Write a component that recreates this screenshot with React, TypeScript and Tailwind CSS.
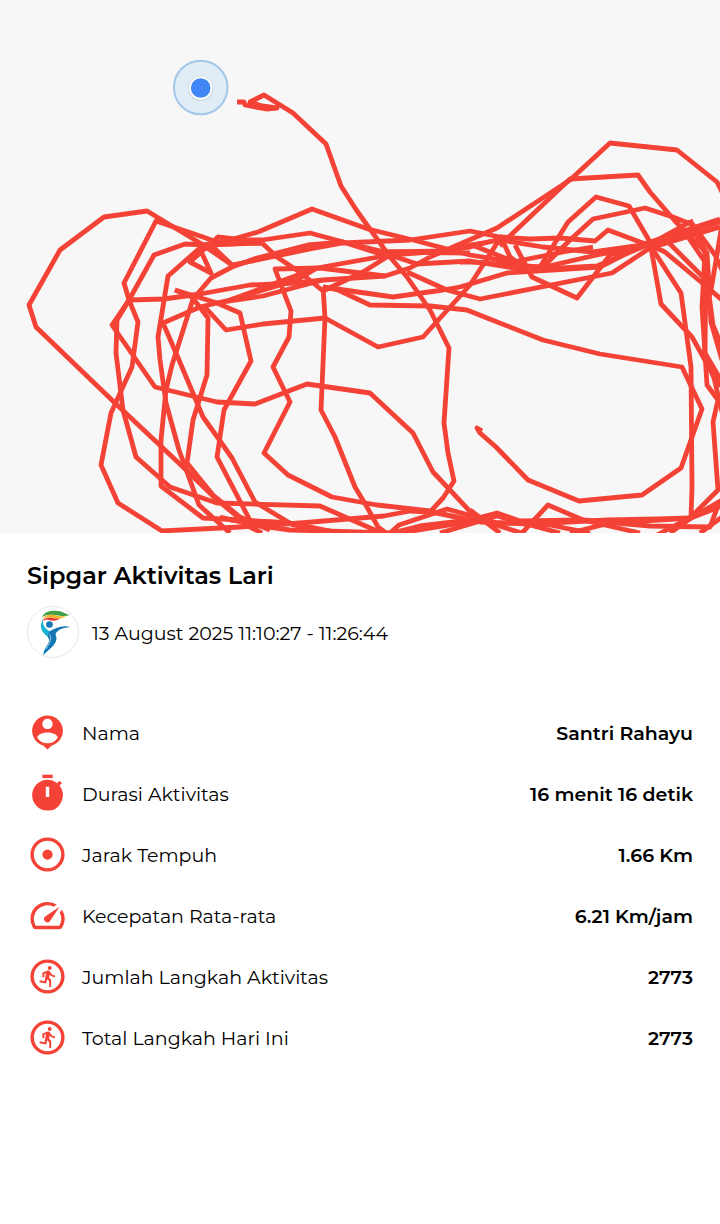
import React from "react";

const routeLines = [
  // start and end of the run
  "237,102 244,102 245,105 266,109 277,108 262,106 250,102 264,95 293,113 326,144 341,186 357,211 390,257 407,277 430,310 449,348 444,423 448,453 454,481 443,498 430,512",
  "482,431 477,428 480,433 496,447 528,480 579,501 642,495 681,468 702,409 682,367 600,354 543,340 487,318 467,310 430,306 370,305 338,290 323,287",
  // west side
  "232,265 200,243 147,211 104,217 60,250 29,305 36,327 115,403 183,467 216,499 250,527 262,533",
  "262,243 222,244 203,237 156,221 124,283 129,300 138,322 132,367 111,413 101,465 118,503 162,531 240,527 300,523 384,516 410,511 430,512",
  "262,243 207,245 185,244 154,255 129,300 117,320 116,353 123,410 136,457 170,487 217,503 320,506 377,531",
  "323,280 297,283 250,285 200,294 164,299 129,300 112,325 155,387 217,402 255,404 307,384 370,393 413,433 433,472 480,522",
  "232,265 211,245 200,248 168,276 158,337 160,360 166,403 179,450 199,505 230,533",
  "317,268 230,300 200,307 163,323 179,360 203,417 218,438 232,458 255,502 293,525 340,533",
  "175,290 217,303 240,313 251,361 224,410 217,457 255,530",
  "175,290 192,297 208,318 207,375 193,420 187,463 213,495 240,517 270,530",
  "203,305 226,330 263,324 325,318 378,347 423,337 470,285 501,237 510,257 527,270",
  "390,257 343,242 308,245 257,258 232,267 211,278 193,299 172,365 166,390 161,440 161,486 203,518 240,520 290,523",
  "200,249 211,273 190,262 218,237 243,240 262,240 310,233 347,243 385,252 470,253",
  // upper straight
  "203,245 230,240 258,232 312,209 368,229 413,240 470,255 513,262 563,252 593,247",
  "232,265 257,260 310,249 343,243 410,240 470,231 500,237 530,239 560,238 595,241 608,230 640,242 650,245",
  "430,257 410,268 385,276 320,268 275,269 291,311 289,337 273,367 290,402 264,453 288,475 332,497 377,505 430,511 480,522",
  "262,243 277,257 301,273 323,291 363,272 390,255 417,264 470,261 527,270 597,266 647,245",
  "217,303 230,301 263,296 323,280 385,276",
  "230,300 297,280 317,268 390,255 430,252 470,247 500,239",
  "323,287 325,318 321,410 335,437 355,487 367,507 378,527 386,533",
  "323,287 393,297 443,290 460,287 507,273 600,267 647,243 720,219",
  "407,272 447,290 480,299 612,273 650,248 720,227",
  "385,252 450,251 470,245 500,240 543,247 593,252 650,244 690,222",
  "430,257 460,244 497,228 570,180 610,143 677,150 717,182 722,192",
  "500,246 513,233 570,179 638,175 650,192 675,221 707,253 709,285",
  "460,262 472,262 540,267 568,222 596,197 629,206 650,242 661,304 692,337 720,387",
  "527,270 545,265 570,240 593,219 645,208 673,217 693,225 715,255 722,270",
  "515,245 532,277 577,298 610,255 650,243",
  "472,245 510,260 527,271 597,255 650,245 720,222",
  // east side
  "650,245 681,293 691,367 692,487 691,517",
  "650,245 665,252 707,287 722,300",
  "665,239 708,282 711,322 722,360",
  "680,225 705,262 709,295 713,325 722,347",
  "690,220 705,253 702,307 705,353 722,382",
  "690,220 706,252 705,353 707,385 718,400 713,422 718,490 691,517 657,535",
  "722,225 711,290 703,310",
  "703,350 714,378 722,412",
  // lower straight
  "230,520 290,523 340,533",
  "220,517 253,525 290,530 390,533 399,525 447,509 497,523 550,523 607,520 657,519 691,518 722,500",
  "392,533 420,526 470,520 497,513 520,521 583,520 650,526 710,527 719,503",
  "430,512 480,522 550,525 590,533",
  "400,533 480,520 522,533 548,505 583,520 640,533",
  "470,510 500,533",
  "440,533 497,516 560,533",
  "570,533 610,523 691,518 722,506",
  "670,533 691,518",
  "700,533 722,517",
];

const RouteMap = () => (
  <svg
    viewBox="0 0 720 533"
    className="block w-full bg-[#f7f7f7]"
    role="img"
    aria-label="Rute lari"
  >
    <g
      fill="none"
      stroke="#f44336"
      strokeWidth="4.8"
      strokeLinejoin="round"
    >
      {routeLines.map((points, index) => (
        <polyline key={index} points={points} />
      ))}
    </g>
    <circle cx="200.7" cy="87.5" r="26.8" fill="#e0edf6" stroke="#a3c6e9" strokeWidth="2" />
    <circle cx="200.7" cy="88.5" r="12.6" fill="#00000014" />
    <circle cx="200.7" cy="88" r="11.5" fill="#fff" />
    <circle cx="200.7" cy="88" r="9.8" fill="#4285f4" />
  </svg>
);

const Logo = () => (
  <svg viewBox="0 0 52 52" className="size-[52px] shrink-0" aria-hidden="true">
    <circle cx="26" cy="26" r="25.5" fill="#fff" stroke="#e2e2e2" strokeWidth="0.8" />
    <path d="M15 11C18 4 28 4 34 5.500C37 6.500 40 8.500 43 9C37 11 32 9.500 27 9C22 8.500 19 9 15 11z" fill="#43a047" />
    <path d="M15 12.500C20 7.500 25 8.500 30 9.500C33 10.500 36 10.500 39 10C34 14 29 12.500 25 11.700C21 11 19 11.500 15 12.500z" fill="#f5b72c" />
    <path d="M15 15C19 10 24 11.500 27 12.200C29 12.700 31 12.700 33 12.500C29 15.500 25 14.700 22 14C19 13.500 18 14 15 15z" fill="#e5392f" />
    <path d="M16 13C12 20 14 26 21 31C24 34 22 37 19 41C17 44 16.500 46 16.500 49C21 44 28 39 28.500 33C28.500 29 25 27 22 25C17 22 15.500 18 16 13z" fill="#18b3d0" />
    <path d="M43 21C35 19 29 22 23 25C21 27 20 30 22 33C23 37 18 41 16.500 49C21 44 29 39 29.500 33C29.500 30 28 29 29 27C32 23 36 22 43 21z" fill="#1477b5" />
    <path d="M22 28C26 32 22 38 19 43" fill="none" stroke="#fff" strokeWidth="0.6" />
    <circle cx="22.500" cy="18.500" r="3.300" fill="#1477b5" />
  </svg>
);

interface IconProps {
  children: React.ReactNode;
}

const Icon = ({ children }: IconProps) => (
  <svg
    viewBox="0 0 24 24"
    fill="currentColor"
    className="size-[41px] shrink-0 text-[#f44336]"
    aria-hidden="true"
  >
    {children}
  </svg>
);

const PersonPinIcon = () => (
  <Icon>
    <path d="M12 2a9 9 0 0 0-9 9c0 4.170 2.840 7.670 6.690 8.690L12 22l2.310-2.310C18.160 18.670 21 15.170 21 11a9 9 0 0 0-9-9zm0 2c1.660 0 3 1.340 3 3s-1.340 3-3 3-3-1.340-3-3 1.340-3 3-3zm0 14.300a7.200 7.200 0 0 1-6-3.220c.03-1.990 4-3.080 6-3.080 1.990 0 5.970 1.090 6 3.080a7.200 7.200 0 0 1-6 3.220z" />
  </Icon>
);

const TimerIcon = () => (
  <Icon>
    <path d="M15 1H9v2h6V1z" />
    <path d="M19.030 7.390l1.420-1.420c-.43-.51-.9-.99-1.410-1.410l-1.420 1.420A8.962 8.962 0 0 0 12 4c-4.970 0-9 4.030-9 9s4.020 9 9 9a8.994 8.994 0 0 0 7.030-14.610zM13 14h-2V8h2v6z" />
  </Icon>
);

const TargetIcon = () => (
  <Icon>
    <circle cx="12" cy="12" r="9" fill="none" stroke="currentColor" strokeWidth="2" />
    <circle cx="12" cy="12" r="3" />
  </Icon>
);

const SpeedIcon = () => (
  <Icon>
    <path d="M20.380 8.570l-1.230 1.850a8 8 0 0 1-.22 7.580H5.070A8 8 0 0 1 15.580 6.850l1.850-1.230A10 10 0 0 0 3.350 19a2 2 0 0 0 1.720 1h13.850a2 2 0 0 0 1.740-1 10 10 0 0 0-.27-10.440z" />
    <path d="M10.590 15.410a2 2 0 0 0 2.830 0l5.660-8.490-8.490 5.660a2 2 0 0 0 0 2.830z" />
  </Icon>
);

const RunIcon = () => (
  <Icon>
    <circle cx="12" cy="12" r="9" fill="none" stroke="currentColor" strokeWidth="2" />
    <path
      transform="translate(5.600 5.050) scale(.57)"
      d="M13.490 5.480c1.100 0 2-.9 2-2s-.9-2-2-2-2 .9-2 2 .9 2 2 2zm-3.600 13.900l1-4.400 2.100 2v6h2v-7.500l-2.100-2 .6-3c1.300 1.500 3.300 2.500 5.500 2.500v-2c-1.900 0-3.500-1-4.300-2.400l-1-1.600c-.4-.6-1-1-1.700-1-.3 0-.5.1-.8.1l-5.200 2.200v4.700h2v-3.400l1.800-.7-1.600 8.100-4.900-1-.4 2 7 1.400z"
    />
  </Icon>
);

const stats = [
  { label: "Nama", value: "Santri Rahayu", icon: <PersonPinIcon /> },
  { label: "Durasi Aktivitas", value: "16 menit 16 detik", icon: <TimerIcon /> },
  { label: "Jarak Tempuh", value: "1.66 Km", icon: <TargetIcon /> },
  { label: "Kecepatan Rata-rata", value: "6.21 Km/jam", icon: <SpeedIcon /> },
  { label: "Jumlah Langkah Aktivitas", value: "2773", icon: <RunIcon /> },
  { label: "Total Langkah Hari Ini", value: "2773", icon: <RunIcon /> },
];

export default function App() {
  return (
    <main className="min-h-screen bg-white font-[Montserrat,Inter,sans-serif] text-black">
      <RouteMap />

      <section className="px-[27px] pt-[27px]">
        <h1 className="text-2xl leading-8 font-semibold">
          Sipgar Aktivitas Lari
        </h1>
        <div className="mt-[14px] flex items-center gap-[13px]">
          <Logo />
          <p className="pt-1 text-[19px] leading-6 font-normal">
            13 August 2025 11:10:27 - 11:26:44
          </p>
        </div>

        <dl className="mt-11">
          {stats.map((stat) => (
            <div
              key={stat.label}
              className="flex h-[61px] items-center justify-between"
            >
              <dt className="flex items-center gap-[14px] text-[19px] leading-6 font-normal">
                {stat.icon}
                <span className="pt-[2px]">{stat.label}</span>
              </dt>
              <dd className="pt-[2px] text-[19px] leading-6 font-semibold">
                {stat.value}
              </dd>
            </div>
          ))}
        </dl>
      </section>
    </main>
  );
}
